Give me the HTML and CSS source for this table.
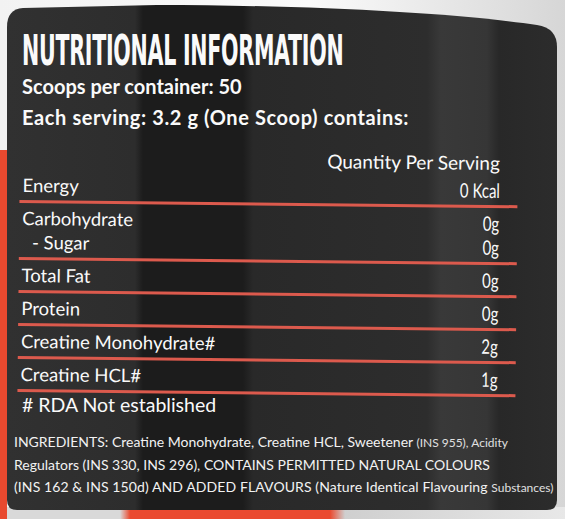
FILE: index.html
```html
<!DOCTYPE html>
<html>
<head>
    <link rel="stylesheet" href="styles.css">
</head>
<body>
    <div class="label">
        <h1 class="title"><span>NUTRITIONAL INFORMATION</span></h1>
        <p class="serving">Scoops per container: 50</p>
        <p class="serving serving-wide">Each serving: 3.2 g (One Scoop) contains:</p>

        <div class="facts">
            <div class="facts-head">Quantity Per Serving</div>
            <div class="row">
                <span>Energy</span><span class="qty">0&nbsp;Kcal</span>
            </div>
            <div class="row">
                <span>Carbohydrate</span><span class="qty">0g</span>
                <span class="sub">- Sugar</span><span class="qty">0g</span>
            </div>
            <div class="row">
                <span>Total Fat</span><span class="qty">0g</span>
            </div>
            <div class="row">
                <span>Protein</span><span class="qty">0g</span>
            </div>
            <div class="row">
                <span>Creatine Monohydrate#</span><span class="qty">2g</span>
            </div>
            <div class="row">
                <span>Creatine HCL#</span><span class="qty">1g</span>
            </div>
        </div>

        <p class="note"># RDA Not established</p>

        <p class="ingredients">
            <span class="line line-1">INGREDIENTS: Creatine Monohydrate, Creatine HCL, Sweetener <span class="small">(INS 955), Acidity</span></span>
            <span class="line line-2">Regulators (INS 330, INS 296), CONTAINS PERMITTED NATURAL COLOURS</span>
            <span class="line line-3">(INS 162 &amp; INS 150d) AND ADDED FLAVOURS (Nature Identical Flavouring <span class="small">Substances)</span></span>
        </p>
    </div>
</body>
</html>
```

FILE: styles.css
```css
html, body {
    width: 565px;
    height: 519px;
    overflow: hidden;
}

body {
    margin: 0;
    font-family: Lato, "Open Sans", sans-serif;
    color: #fafafa;
    background:
        linear-gradient(to bottom, transparent 150px, #e8492f 150px) left top / 7px 100% no-repeat,
        linear-gradient(90deg, #d9d9d9 0, #d9d9d9 120px, #ea4a30 130px, #ea4a30 330px, #cfcfcf 345px, #e8e8e8 100%) left bottom / 100% 12px no-repeat,
        linear-gradient(90deg, #f2f2f2, #fbfbfb 55%, #e6e6e6 80%, #d6d6d6);
}

.label {
    width: 550px;
    height: 505px;
    margin: 5px 0 0 7px;
    padding: 26px 0 0 15px;
    box-sizing: border-box;
    background: linear-gradient(90deg,
        #313131 0, #2d2d2d 128px, #1c1c1c 136px, #1c1c1c 236px,
        #292929 246px, #2d2d2d 420px, #393939 434px, #363636 480px,
        #282828 492px, #2c2c2c 100%);
    clip-path: path('M0,22 Q0,4 16,3 L150,0 C300,0 450,8 530,20 Q550,23 550,42 L550,495 Q550,505 540,505 L10,505 Q0,505 0,495 Z');
}

.title {
    margin: 0;
    height: 40px;
    font-family: "DejaVu Sans Condensed", "DejaVu Sans", sans-serif;
    font-size: 42px;
    font-weight: bold;
    line-height: 40px;
    letter-spacing: -0.5px;
}

.title span {
    display: inline-block;
    margin-right: -280px;
    transform: scaleX(0.545);
    transform-origin: left center;
    white-space: nowrap;
}

.serving {
    margin: 0;
    font-size: 20px;
    font-weight: bold;
    line-height: 31px;
}

.serving-wide {
    letter-spacing: 0.6px;
}

.facts {
    width: 498px;
    margin: 13px 0 0 -2px;
    transform: rotate(0.6deg);
    transform-origin: left top;
}

.facts-head {
    text-align: right;
    padding-right: 18px;
    font-size: 19px;
    line-height: 24px;
}

.row {
    display: grid;
    grid-template-columns: 1fr auto;
    padding: 3px 18px 3px 3px;
    font-size: 18.5px;
    line-height: 24px;
    border-bottom: 3px solid #dc5a4d;
}

.row:first-of-type {
    padding-top: 0;
}

.qty {
    justify-self: end;
    font-size: 20px;
    transform: scaleX(0.75);
    transform-origin: right center;
}

.sub {
    padding-left: 10px;
}

.note {
    margin: 1px 0 0;
    font-size: 19.5px;
    line-height: 24px;
}

.ingredients {
    margin: 14px 0 0 -8px;
    font-size: 14px;
    line-height: 22px;
    color: #f2f2f2;
}

.ingredients .line {
    display: block;
    white-space: nowrap;
}

.ingredients .line-3 {
    letter-spacing: 0.1px;
}

.ingredients .small {
    font-size: 12px;
    letter-spacing: 0;
    color: #e0e0e0;
}
```
